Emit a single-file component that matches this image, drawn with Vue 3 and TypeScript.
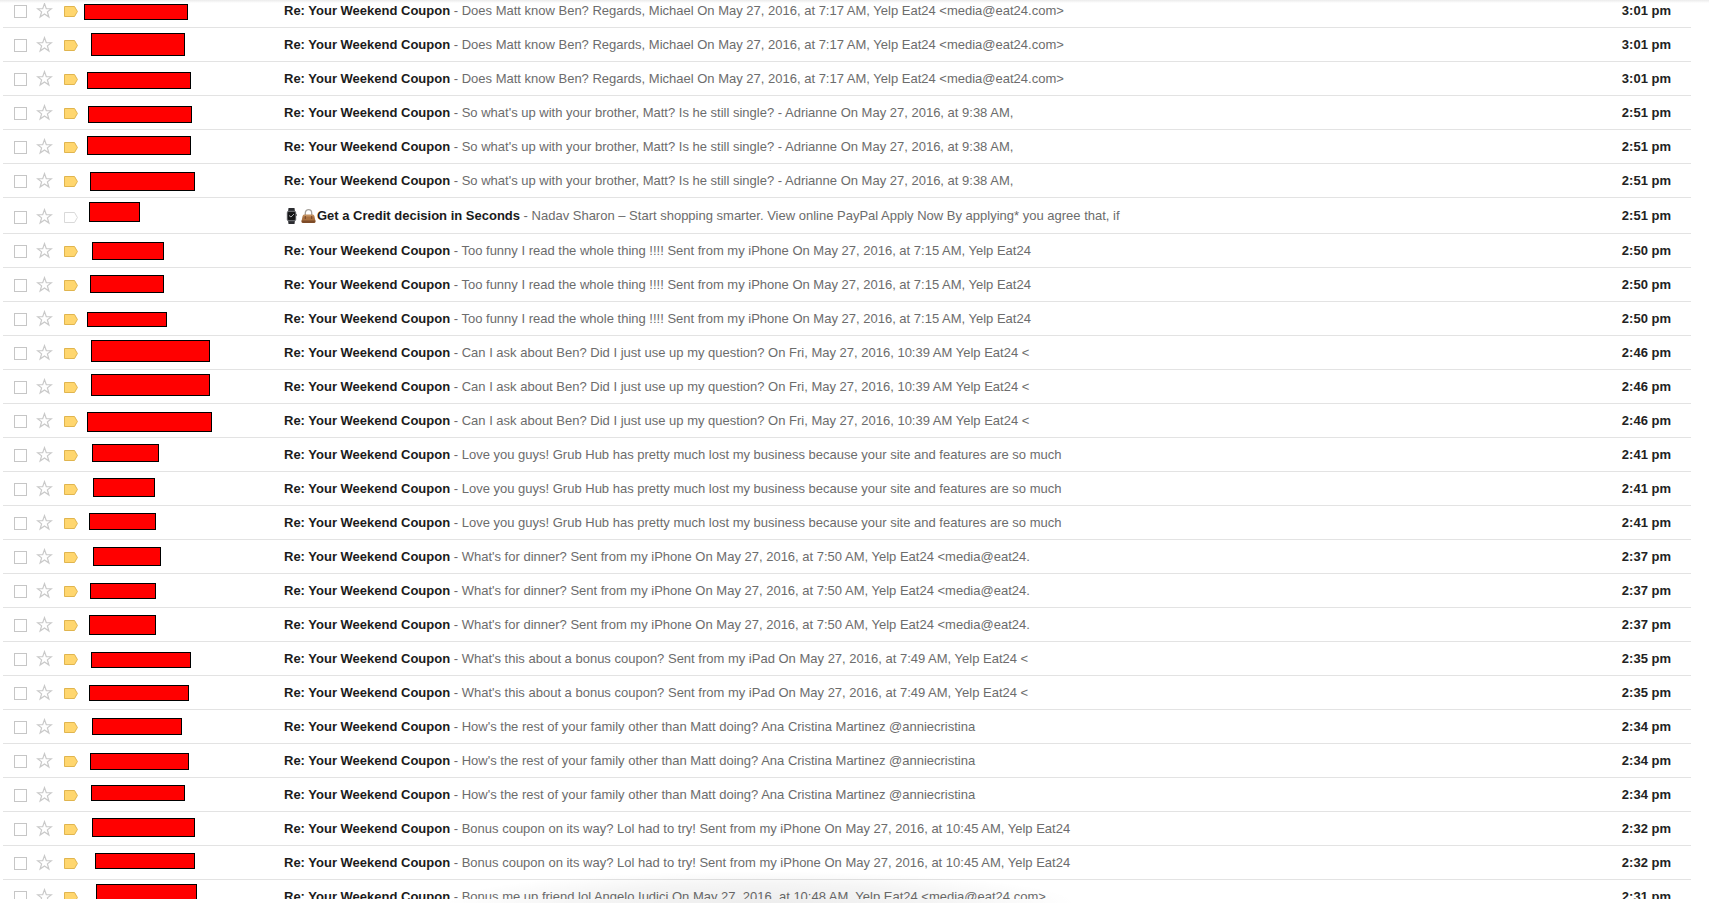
<script setup lang="ts">
interface Mask { x: number; y: number; w: number; h: number }
interface Mail {
  id: number
  subject: string
  snippet: string
  time: string
  mask: Mask
  promo: boolean
}
type MaskTuple = [number, number, number, number]

const COUPON = 'Re: Your Weekend Coupon'

const threads: { snippet: string; time: string; subject?: string; masks: MaskTuple[] }[] = [
  {
    snippet: 'Does Matt know Ben? Regards, Michael On May 27, 2016, at 7:17 AM, Yelp Eat24 <media@eat24.com>',
    time: '3:01 pm',
    masks: [[4, 10, 104, 16], [11, 5, 94, 23], [7, 10, 104, 17]],
  },
  {
    snippet: "So what's up with your brother, Matt? Is he still single? - Adrianne On May 27, 2016, at 9:38 AM,",
    time: '2:51 pm',
    masks: [[8, 10, 104, 17], [7, 6, 104, 19], [10, 8, 105, 19]],
  },
  {
    subject: 'Get a Credit decision in Seconds',
    snippet: 'Nadav Sharon – Start shopping smarter. View online PayPal Apply Now By applying* you agree that, if',
    time: '2:51 pm',
    masks: [[9, 4, 51, 20]],
  },
  {
    snippet: 'Too funny I read the whole thing !!!! Sent from my iPhone On May 27, 2016, at 7:15 AM, Yelp Eat24',
    time: '2:50 pm',
    masks: [[12, 8, 72, 18], [10, 7, 74, 18], [7, 10, 80, 15]],
  },
  {
    snippet: 'Can I ask about Ben? Did I just use up my question? On Fri, May 27, 2016, 10:39 AM Yelp Eat24 <',
    time: '2:46 pm',
    masks: [[11, 4, 119, 22], [11, 4, 119, 22], [7, 8, 125, 20]],
  },
  {
    snippet: 'Love you guys! Grub Hub has pretty much lost my business because your site and features are so much',
    time: '2:41 pm',
    masks: [[12, 6, 67, 18], [13, 6, 62, 19], [9, 7, 67, 17]],
  },
  {
    snippet: "What's for dinner? Sent from my iPhone On May 27, 2016, at 7:50 AM, Yelp Eat24 <media@eat24.",
    time: '2:37 pm',
    masks: [[13, 7, 68, 19], [10, 9, 66, 16], [9, 7, 67, 20]],
  },
  {
    snippet: "What's this about a bonus coupon? Sent from my iPad On May 27, 2016, at 7:49 AM, Yelp Eat24 <",
    time: '2:35 pm',
    masks: [[11, 10, 100, 16], [9, 9, 100, 16]],
  },
  {
    snippet: "How's the rest of your family other than Matt doing? Ana Cristina Martinez @anniecristina",
    time: '2:34 pm',
    masks: [[12, 8, 90, 17], [10, 9, 99, 17], [11, 7, 94, 16]],
  },
  {
    snippet: 'Bonus coupon on its way? Lol had to try! Sent from my iPhone On May 27, 2016, at 10:45 AM, Yelp Eat24',
    time: '2:32 pm',
    masks: [[12, 6, 103, 19], [15, 7, 100, 16]],
  },
  {
    snippet: 'Bonus me up friend lol Angelo Iudici On May 27, 2016, at 10:48 AM, Yelp Eat24 <media@eat24.com>',
    time: '2:31 pm',
    masks: [[16, 4, 101, 19]],
  },
]

let nextId = 0
const mails: Mail[] = threads.flatMap((t) =>
  t.masks.map(([x, y, w, h]) => ({
    id: nextId++,
    subject: t.subject ?? COUPON,
    snippet: t.snippet,
    time: t.time,
    mask: { x, y, w, h },
    promo: t.subject !== undefined,
  })),
)

const maskStyle = (m: Mask) => ({
  left: `${m.x}px`,
  top: `${m.y}px`,
  width: `${m.w}px`,
  height: `${m.h}px`,
})
</script>

<template>
  <div class="page">
    <main class="viewport">
      <table class="mails">
        <colgroup>
          <col class="c-check" />
          <col class="c-star" />
          <col class="c-label" />
          <col class="c-sender" />
          <col />
          <col class="c-time" />
        </colgroup>
        <tbody>
          <tr v-for="mail in mails" :key="mail.id" :class="{ promo: mail.promo }">
            <td><input class="check" type="checkbox" aria-label="Select conversation" /></td>
            <td>
              <button class="icon" type="button" aria-label="Star">
                <svg width="17" height="17" viewBox="0 0 17 17">
                  <path d="M8.5 1.6 L10.3 6.6 L15.4 6.7 L11.4 9.9 L12.9 15 L8.5 12 L4.1 15 L5.6 9.9 L1.6 6.7 L6.7 6.6 Z" fill="#fff" stroke="#c9c9c9" stroke-width="1.2" />
                </svg>
              </button>
            </td>
            <td>
              <button class="icon" type="button" aria-label="Importance">
                <svg class="tag" width="15" height="11" viewBox="0 0 15 11">
                  <path d="M.5 .5 H10.5 L13.4 5.5 L10.5 10.5 H.5 Z" />
                </svg>
              </button>
            </td>
            <td class="sender"><span class="mask" :style="maskStyle(mail.mask)"></span></td>
            <td>
              <div class="line">
                <span v-if="mail.promo" class="emojis">
                  <svg width="13" height="16" viewBox="0 0 13 16">
                    <path d="M3.5 0H9.5L10 4H3Z M3 12H10L9.5 16H3.5Z" fill="#2b2c30" />
                    <rect x="1.8" y="2.8" width="9.4" height="10.4" rx="2" fill="#66686c" />
                    <rect x="2.8" y="4" width="7.4" height="8" rx="1" fill="#141516" />
                    <path d="M4 7.5L6 9L9 6" fill="none" stroke="#a9acae" />
                    <path d="M11 6H12V8H11Z" fill="#777" />
                  </svg>
                  <svg width="15" height="16" viewBox="0 0 15 16">
                    <path d="M4.3 8.5V5C4.3 .5 10.7 .5 10.7 5V8.5" fill="none" stroke="#a5a19b" stroke-width="1.3" />
                    <path d="M3 6.8H12Q13 6.8 13.3 8L14.5 13Q14.6 15 13 15H2Q.4 15 .5 13L1.7 8Q2 6.8 3 6.8Z" fill="#a9703f" />
                    <path d="M3 6.8H12Q13 6.8 13.2 8.6H1.8Q2 6.8 3 6.8Z" fill="#c39160" />
                    <path d="M.6 12.6H14.4Q14.8 15 13 15H2Q.2 15 .6 12.6Z" fill="#7d4b28" />
                    <path d="M4.3 8V11M10.7 8V11" stroke="#74452a" />
                  </svg>
                </span><b>{{ mail.subject }}</b><span class="snippet"> - {{ mail.snippet }}</span>
              </div>
            </td>
            <td class="time">{{ mail.time }}</td>
          </tr>
        </tbody>
      </table>
    </main>
  </div>
</template>

<style>
body {
  margin: 0;
  background: #fff;
}
</style>

<style scoped>
.page {
  position: relative;
  box-sizing: border-box;
  height: 100vh;
  padding-bottom: 4px;
  overflow: hidden;
  background: #fff;
  font: 13px/16px "Liberation Sans", Arial, sans-serif;
  color: #222;
}
.viewport {
  height: 100%;
  overflow: hidden;
}
.page::before {
  content: "";
  position: absolute;
  inset: 0 0 auto;
  height: 3px;
  background: linear-gradient(#ebebeb, #fff);
}
.page::after {
  content: "";
  position: absolute;
  left: 26%;
  right: 37%;
  bottom: 0;
  height: 32px;
  background: radial-gradient(ellipse closest-side at 50% 100%, rgba(0, 0, 0, 0.07), rgba(0, 0, 0, 0.04) 60%, transparent);
  background: radial-gradient(50% 100% at 50% 100%, rgba(0, 0, 0, 0.07), rgba(0, 0, 0, 0.04) 60%, transparent);
  pointer-events: none;
}
.mails {
  width: calc(100% - 21px);
  margin: -6px 18px 0 3px;
  table-layout: fixed;
  border-collapse: separate;
  border-spacing: 0;
}
.c-check { width: 33px; }
.c-star { width: 25px; }
.c-label { width: 19px; }
.c-sender { width: 204px; }
.c-time { width: 100px; }
td {
  box-sizing: border-box;
  height: 34px;
  padding: 0;
  border-bottom: 1px solid #e3e3e3;
  vertical-align: middle;
}
.promo td {
  height: 36px;
  padding-top: 1px;
}
.check {
  display: block;
  appearance: none;
  box-sizing: border-box;
  width: 13px;
  height: 13px;
  margin: 2px 0 0 11px;
  border: 1px solid #c6c6c6;
  background: #fff;
}
.icon {
  display: block;
  padding: 0;
  border: 0;
  background: none;
}
.icon svg {
  display: block;
}
.icon .tag {
  margin: 2px 0 0 3px;
  fill: #ffd66e;
  stroke: #e0b54f;
}
.promo .icon .tag {
  fill: #fff;
  stroke: #d9d9d9;
}
.sender {
  position: relative;
}
.mask {
  position: absolute;
  box-sizing: border-box;
  border: 1px solid #000;
  background: #f00;
}
.line {
  overflow: hidden;
  white-space: nowrap;
  text-overflow: ellipsis;
}
.emojis {
  display: inline-flex;
  gap: 3px;
  margin: 0 1px;
  height: 16px;
  vertical-align: top;
}
b {
  color: #1b1b1b;
}
.snippet {
  color: #6c6c6c;
}
.time {
  padding-right: 20px;
  font-weight: bold;
  text-align: right;
  white-space: nowrap;
}
.promo .time {
  padding-right: 20px;
}
</style>
